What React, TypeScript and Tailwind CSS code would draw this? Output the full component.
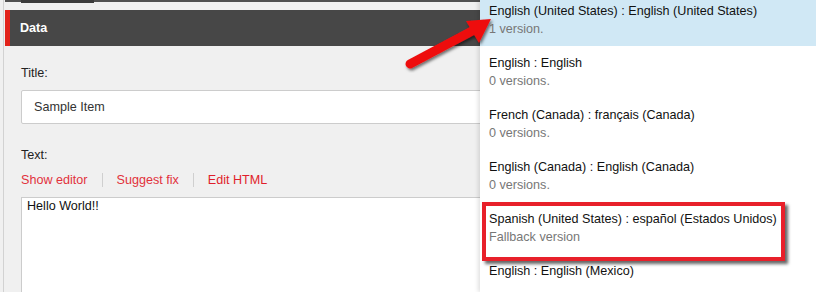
import React from 'react'

const languages = [
  { title: 'English (United States) : English (United States)', sub: '1 version.', active: true },
  { title: 'English : English', sub: '0 versions.' },
  { title: 'French (Canada) : français (Canada)', sub: '0 versions.' },
  { title: 'English (Canada) : English (Canada)', sub: '0 versions.' },
  { title: 'Spanish (United States) : español (Estados Unidos)', sub: 'Fallback version' },
  { title: 'English : English (Mexico)', sub: '' },
]

function Arrow() {
  // red callout arrow pointing at the first language
  return (
    <svg className="absolute left-0 top-0" width="816" height="292" viewBox="0 0 816 292">
      <defs>
        <filter id="arrowShadow" x="-20%" y="-20%" width="140%" height="140%">
          <feDropShadow dx="1.5" dy="2" stdDeviation="1.5" floodColor="#000" floodOpacity="0.55" />
        </filter>
      </defs>
      <g filter="url(#arrowShadow)">
        <line x1="410" y1="64" x2="472" y2="31" stroke="#ee1010" strokeWidth="9" strokeLinecap="round" />
        <polygon points="491,19 466,21 479,43" fill="#ee1010" />
      </g>
    </svg>
  )
}

export default function App() {
  return (
    <div className="relative h-[292px] w-[816px] overflow-hidden bg-[#f0f0f0] font-['Liberation_Sans',Arial,sans-serif] text-[12.6px]">
      <div className="ml-[3px] h-full border-l border-[#d2d2d2] pl-[1px]">
        <div className="relative h-[10px]">
          <div className="h-[2px] bg-[#505050]" />
          <div className="absolute left-[16px] top-0 h-[3px] w-[73px] bg-[#3c3c3c]" />
        </div>

        <div className="flex h-[36px] items-center border-l-[5px] border-[#e2231a] bg-[#474747] pl-[10px] font-bold text-white">
          Data
        </div>

        <div className="pl-[16px]">
          <div className="mt-[19px] leading-[16px] text-[#222]">Title:</div>
          <div className="mt-[9px] flex h-[34px] items-center rounded-[2px] border border-[#cccccc] bg-white pl-[12px] text-[#333]">
            Sample Item
          </div>

          <div className="mt-[23px] leading-[16px] text-[#222]">Text:</div>
          <div className="mt-[9px] flex items-center leading-[16px] text-[#e2323c]">
            <span>Show editor</span>
            <span className="mx-[14px] h-[14px] w-px bg-[#cfcfcf]" />
            <span>Suggest fix</span>
            <span className="mx-[14px] h-[14px] w-px bg-[#cfcfcf]" />
            <span className="text-[#e01e2b]">Edit HTML</span>
          </div>
          <div className="mt-[9px] h-[120px] border border-[#cccccc] bg-white pl-[5px] leading-[16px] text-[#111]">
            Hello World!!
          </div>
        </div>
      </div>

      <div className="absolute left-[480px] top-0 h-full w-[336px] bg-white shadow-[-2px_0_4px_rgba(0,0,0,0.12)]">
        <div className="-mt-[6px]">
          {languages.map((lang) => (
            <div
              key={lang.title}
              className={lang.active ? 'bg-[#d0e8f5] px-[9px] pb-[8px] pt-[8px]' : 'px-[9px] pb-[8px] pt-[8px]'}
            >
              <div className="leading-[18px] text-[#111]">{lang.title}</div>
              {lang.sub && <div className="leading-[18px] text-[#777]">{lang.sub}</div>}
            </div>
          ))}
        </div>
      </div>

      <div className="absolute left-[482px] top-[202px] h-[59px] w-[303px] border-[4px] border-[#e8202a] shadow-[3px_3px_3px_rgba(0,0,0,0.6)]" />

      <Arrow />
    </div>
  )
}
